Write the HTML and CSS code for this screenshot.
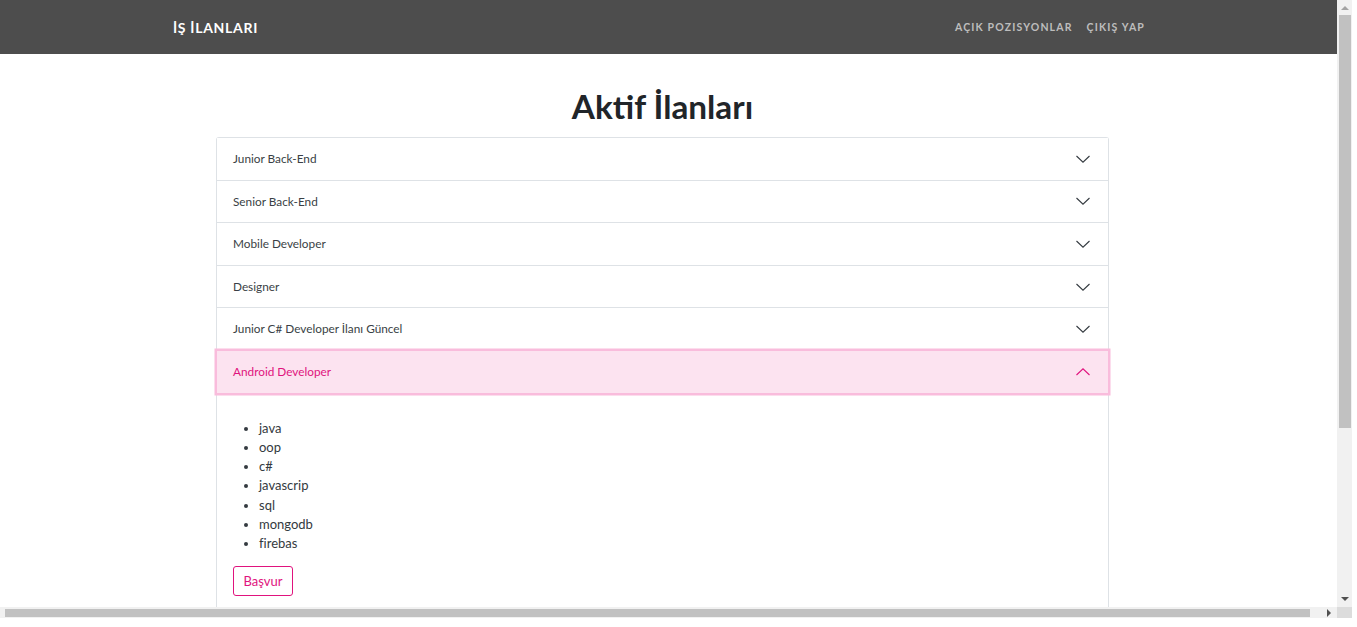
FILE: index.html
```html
<!DOCTYPE html>
<html lang="tr">
<head>
<meta charset="utf-8">
<title>İş İlanları</title>
<link rel="stylesheet" href="styles.css">
</head>
<body>
<div class="frame">
  <div class="viewport">
    <nav class="navbar">
      <a class="brand" href="#">İŞ İLANLARI</a>
      <div class="nav-links">
        <a href="#">AÇIK POZISYONLAR</a>
        <a href="#">ÇIKIŞ YAP</a>
      </div>
    </nav>
    <main class="content">
      <h1 class="title">Aktif İlanları</h1>
      <div class="accordion">
        <div class="acc-item">
          <button class="acc-btn"><span>Junior Back-End</span><svg class="chev" viewBox="0 0 16 16"><polyline points="1.5,5 8,11.2 14.5,5"/></svg></button>
        </div>
        <div class="acc-item">
          <button class="acc-btn"><span>Senior Back-End</span><svg class="chev" viewBox="0 0 16 16"><polyline points="1.5,5 8,11.2 14.5,5"/></svg></button>
        </div>
        <div class="acc-item">
          <button class="acc-btn"><span>Mobile Developer</span><svg class="chev" viewBox="0 0 16 16"><polyline points="1.5,5 8,11.2 14.5,5"/></svg></button>
        </div>
        <div class="acc-item">
          <button class="acc-btn"><span>Designer</span><svg class="chev" viewBox="0 0 16 16"><polyline points="1.5,5 8,11.2 14.5,5"/></svg></button>
        </div>
        <div class="acc-item">
          <button class="acc-btn"><span>Junior C# Developer İlanı Güncel</span><svg class="chev" viewBox="0 0 16 16"><polyline points="1.5,5 8,11.2 14.5,5"/></svg></button>
        </div>
        <div class="acc-item open">
          <button class="acc-btn active"><span>Android Developer</span><svg class="chev" viewBox="0 0 16 16"><polyline points="1.5,11 8,4.8 14.5,11"/></svg></button>
          <div class="acc-body">
            <ul class="skills">
              <li>java</li>
              <li>oop</li>
              <li>c#</li>
              <li>javascrip</li>
              <li>sql</li>
              <li>mongodb</li>
              <li>firebas</li>
            </ul>
            <button class="apply">Başvur</button>
          </div>
        </div>
      </div>
    </main>
  </div>
  <div class="vscroll">
    <div class="arrow up"></div>
    <div class="vthumb"></div>
    <div class="vspace"></div>
    <div class="arrow down"></div>
  </div>
  <div class="hscroll">
    <div class="hthumb"></div>
    <div class="hspace"></div>
    <div class="arrow right"></div>
  </div>
  <div class="corner"></div>
</div>
</body>
</html>
```
FILE: styles.css
```css
* { box-sizing: border-box; }
html, body { margin: 0; padding: 0; }
body {
  background: #fff;
  font-family: Lato, "Noto Sans", "DejaVu Sans", sans-serif;
  color: #343a40;
  height: 627px;
  overflow: hidden;
}
.frame {
  display: grid;
  grid-template-columns: 1337px 15px;
  grid-template-rows: 607px 11px;
  width: 1352px;
}
.viewport {
  overflow: hidden;
  background: #fff;
}
.navbar {
  height: 54px;
  background: #4d4d4d;
  display: flex;
  align-items: center;
  justify-content: space-between;
  padding: 0 192px 0 173px;
}
.brand {
  color: #fff;
  font-weight: 700;
  font-size: 14px;
  letter-spacing: 0.7px;
  text-decoration: none;
}
.nav-links {
  display: flex;
  gap: 14px;
}
.nav-links a {
  color: #bdbdbd;
  font-weight: 700;
  font-size: 10.5px;
  letter-spacing: 1.15px;
  text-decoration: none;
}
.content {
  padding: 0 228px 0 216px;
}
.title {
  margin: 33px 0 12px;
  text-align: center;
  font-size: 33.3px;
  line-height: 38px;
  font-weight: 700;
  color: #212529;
}
.accordion {
  border: 1px solid #dee2e6;
  border-radius: 3px;
  border-bottom: none;
}
.acc-item {
  border-bottom: 1px solid #dee2e6;
}
.acc-btn {
  display: flex;
  width: 100%;
  align-items: center;
  justify-content: space-between;
  padding: 11px 17px 11px 16px;
  border: none;
  background: #fff;
  font-family: inherit;
  font-size: 11.8px;
  line-height: 19.6px;
  color: #3a3f45;
  text-align: left;
  cursor: pointer;
}
.chev {
  width: 16px;
  height: 16px;
  fill: none;
  stroke: #343a40;
  stroke-width: 1.1;
}
.acc-btn.active {
  background: #fce3f0;
  color: #e0137e;
  box-shadow: 0 0 0 2.5px #f9bcdc;
  position: relative;
}
.acc-btn.active .chev { stroke: #e0137e; }
.open { border-bottom: none; }
.acc-body {
  padding: 26px 17px 40px 16px;
}
.skills {
  margin: 0 0 12px;
  padding-left: 26px;
  font-size: 13px;
  line-height: 19.3px;
  color: #343a40;
}
.apply {
  height: 30px;
  width: 60px;
  border: 1px solid #e0137e;
  border-radius: 3px;
  background: #fff;
  color: #e0137e;
  font-family: inherit;
  font-size: 13px;
  padding: 0;
}
.vscroll {
  background: #f1f1f1;
  display: flex;
  flex-direction: column;
  align-items: center;
}
.vthumb {
  width: 12px;
  height: 413px;
  background: #c1c1c1;
}
.vspace { flex: 1; }
.hscroll {
  background: #f1f1f1;
  display: flex;
  align-items: center;
  padding-left: 5px;
}
.hthumb {
  width: 1305px;
  height: 8px;
  background: #c1c1c1;
}
.hspace { flex: 1; }
.corner { background: #dcdcdc; }
.arrow {
  width: 0;
  height: 0;
  border-style: solid;
}
.arrow.up {
  margin: 6px 0 5px;
  border-width: 0 4px 4px 4px;
  border-color: transparent transparent #a3a3a3 transparent;
}
.arrow.down {
  margin: 5px 0 6px;
  border-width: 4px 4px 0 4px;
  border-color: #505050 transparent transparent transparent;
}
.arrow.right {
  margin-right: 6px;
  border-width: 4px 0 4px 4px;
  border-color: transparent transparent transparent #505050;
}
```
